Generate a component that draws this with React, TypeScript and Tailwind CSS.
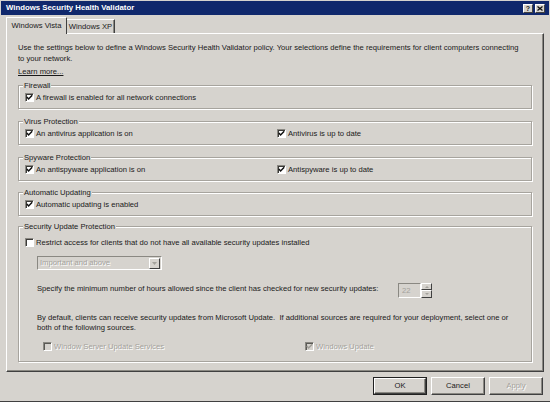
import React from 'react';

function Check({ checked, disabled }: { checked?: boolean; disabled?: boolean }) {
  return (
    <span
      className={
        disabled
          ? 'flex items-center justify-center w-[9px] h-[9px] shrink-0 bg-[#d6d3ce] border border-t-[#8a8882] border-l-[#8a8882] border-b-white border-r-white shadow-[inset_1px_1px_0_#5a5955]'
          : 'flex items-center justify-center w-[9px] h-[9px] shrink-0 bg-white border border-t-[#8a8882] border-l-[#8a8882] border-b-white border-r-white shadow-[inset_1px_1px_0_#3c3b38]'
      }
    >
      {checked && (
        <svg width="7" height="7" viewBox="0 0 7 7">
          <path d="M0.8 3 L2.6 4.9 L6.2 1.2" fill="none" stroke={disabled ? '#a09e98' : '#111'} strokeWidth="1.5" />
        </svg>
      )}
    </span>
  );
}

function Row({ label, checked, disabled }: { label: string; checked?: boolean; disabled?: boolean }) {
  return (
    <div className="flex items-center gap-[2px] h-[11px]">
      <Check checked={checked} disabled={disabled} />
      <span className={disabled ? 'text-[#a4a29c] [text-shadow:1px_1px_0_#fff]' : 'text-[#1a1a1a]'}>{label}</span>
    </div>
  );
}

function Group({ label, children, className }: { label: string; children: React.ReactNode; className: string }) {
  return (
    <fieldset className={'border border-[#a7a49e] shadow-[inset_1px_1px_0_#fff,1px_1px_0_#fff] px-[6px] ' + className}>
      <legend className="-ml-[2px] px-[1px] bg-[#d6d3ce] leading-[11px] text-[#1a1a1a]">{label}</legend>
      {children}
    </fieldset>
  );
}

function Btn({ label, def, disabled }: { label: string; def?: boolean; disabled?: boolean }) {
  return (
    <div
      className={
        def
          ? 'w-[54px] h-[18px] flex items-center justify-center border border-[#202020] bg-[#d6d3ce]'
          : 'w-[54px] h-[18px] flex items-center justify-center bg-[#d6d3ce] border border-t-white border-l-white border-b-[#404040] border-r-[#404040] shadow-[inset_-1px_-1px_0_#8a8882]'
      }
    >
      {def ? (
        <div className="w-full h-full flex items-center justify-center border border-t-white border-l-white border-b-[#404040] border-r-[#404040] shadow-[inset_-1px_-1px_0_#8a8882]">
          {label}
        </div>
      ) : (
        <span className={disabled ? 'text-[#a4a29c] [text-shadow:1px_1px_0_#fff]' : 'text-[#1a1a1a]'}>{label}</span>
      )}
    </div>
  );
}

export default function App() {
  return (
    <div className="w-[550px] h-[402px] bg-[#d6d3ce] flex flex-col px-[1px] pt-[1px] border-b border-[#404040] overflow-hidden font-['Liberation_Sans',Arial,sans-serif] text-[7.65px] text-[#1a1a1a]">
      {/* title bar */}
      <div className="h-[14px] shrink-0 bg-[#10286c] flex items-center justify-between pl-[5px] pr-[4px]">
        <span className="text-white font-bold text-[7.8px] leading-none">Windows Security Health Validator</span>
        <div className="flex gap-[2px]">
          <div className="w-[10px] h-[9px] bg-[#d6d3ce] border border-t-white border-l-white border-b-[#404040] border-r-[#404040] flex items-center justify-center text-[7px] font-bold leading-none">?</div>
          <div className="w-[10px] h-[9px] bg-[#d6d3ce] border border-t-white border-l-white border-b-[#404040] border-r-[#404040] flex items-center justify-center">
            <svg width="6" height="5" viewBox="0 0 6 5">
              <path d="M0.5 0.5 L5.5 4.5 M5.5 0.5 L0.5 4.5" stroke="#111" strokeWidth="1.3" />
            </svg>
          </div>
        </div>
      </div>

      {/* tabs */}
      <div className="h-[18px] shrink-0 flex items-end pl-[5px]">
        <div className="relative z-10 -mb-[1px] h-[17px] w-[61px] flex items-center justify-center bg-[#d6d3ce] border-l border-t border-white border-r border-r-[#404040] rounded-t-[1px]">
          Windows Vista
        </div>
        <div className="h-[14px] w-[48px] flex items-center justify-center border-t border-white border-r border-r-[#404040] shadow-[inset_-1px_0_0_#8a8882]">
          Windows XP
        </div>
      </div>

      {/* panel */}
      <div className="ml-[5px] w-[538px] h-[339px] shrink-0 border-l border-t border-white border-r border-b border-r-[#404040] border-b-[#404040] shadow-[inset_-1px_-1px_0_#8a8882] pl-[11px] pr-[11px] pt-[8px] flex flex-col">
        <p className="leading-[11px]">
          Use the settings below to define a Windows Security Health Validator policy. Your selections define the requirements for client computers connecting
          <br />
          to your network.
        </p>
        <div className="mt-[2px] leading-[11px]">
          <span className="underline">Learn more...</span>
        </div>

        <Group label="Firewall" className="mt-[3px] pt-[1px] pb-[5px]">
          <Row label="A firewall is enabled for all network connections" checked />
        </Group>

        <Group label="Virus Protection" className="mt-[7px] pt-[1px] pb-[5px]">
          <div className="flex">
            <div className="w-[252px]">
              <Row label="An antivirus application is on" checked />
            </div>
            <Row label="Antivirus is up to date" checked />
          </div>
        </Group>

        <Group label="Spyware Protection" className="mt-[7px] pt-[1px] pb-[5px]">
          <div className="flex">
            <div className="w-[252px]">
              <Row label="An antispyware application is on" checked />
            </div>
            <Row label="Antispyware is up to date" checked />
          </div>
        </Group>

        <Group label="Automatic Updating" className="mt-[6px] pt-[1px] pb-[5px]">
          <Row label="Automatic updating is enabled" checked />
        </Group>

        <Group label="Security Update Protection" className="mt-[5px] pt-[5px] pb-[9px]">
          <Row label="Restrict access for clients that do not have all available security updates installed" />

          <div className="mt-[8px] ml-[12px] w-[125px] h-[14px] flex items-center border border-t-[#8a8882] border-l-[#8a8882] border-b-white border-r-white bg-[#d6d3ce]">
            <span className="flex-1 pl-[2px] text-[#a4a29c] [text-shadow:1px_1px_0_#fff]">Important and above</span>
            <div className="w-[11px] h-[11px] mr-[1px] flex items-center justify-center bg-[#d6d3ce] border border-t-white border-l-white border-b-[#404040] border-r-[#404040]">
              <svg width="5" height="3" viewBox="0 0 5 3">
                <path d="M0 0 L5 0 L2.5 3 Z" fill="#a4a29c" />
              </svg>
            </div>
          </div>

          <div className="mt-[13px] ml-[12px] flex items-center h-[15px]">
            <span className="w-[361px] mb-[3px]">
              Specify the minimum number of hours allowed since the client has checked for new security updates:
            </span>
            <div className="flex h-[15px]">
              <div className="w-[23px] h-[15px] flex items-center pl-[3px] border border-t-[#8a8882] border-l-[#8a8882] border-b-white border-r-white bg-[#d6d3ce] text-[#a4a29c]">
                22
              </div>
              <div className="flex flex-col w-[11px]">
                <div className="h-[7px] flex items-center justify-center border border-t-white border-l-white border-b-[#404040] border-r-[#404040]">
                  <svg width="4" height="2" viewBox="0 0 4 2"><path d="M0 2 L4 2 L2 0 Z" fill="#a4a29c" /></svg>
                </div>
                <div className="h-[8px] flex items-center justify-center border border-t-white border-l-white border-b-[#404040] border-r-[#404040]">
                  <svg width="4" height="2" viewBox="0 0 4 2"><path d="M0 0 L4 0 L2 2 Z" fill="#a4a29c" /></svg>
                </div>
              </div>
            </div>
          </div>

          <p className="mt-[15px] ml-[12px] leading-[10px]">
            By default, clients can receive security updates from Microsoft Update.&nbsp; If additional sources are required for your deployment, select one or
            <br />
            both of the following sources.
          </p>

          <div className="mt-[8px] pl-[18px] flex">
            <div className="w-[262px]">
              <Row label="Window Server Update Services" disabled />
            </div>
            <Row label="Windows Update" checked disabled />
          </div>
        </Group>
      </div>

      {/* buttons */}
      <div className="mt-[5px] flex justify-end gap-[4px] pr-[6px]">
        <Btn label="OK" def />
        <Btn label="Cancel" />
        <Btn label="Apply" disabled />
      </div>
    </div>
  );
}
